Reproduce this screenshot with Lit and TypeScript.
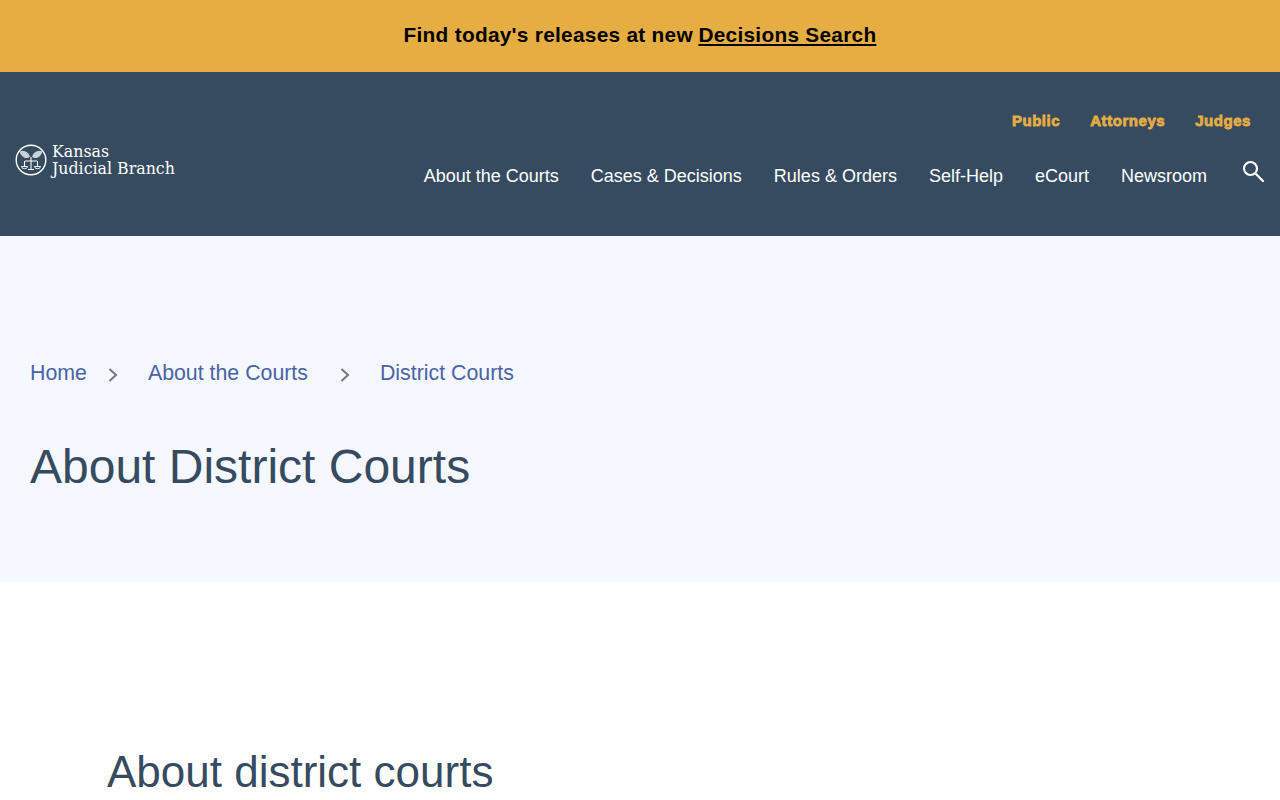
import { LitElement, html, css } from "lit";
import { customElement } from "lit/decorators.js";

@customElement("app-root")
export class AppRoot extends LitElement {
  static styles = css`
    :host { display: block; height: 800px; overflow: hidden; font-family: "Liberation Sans", Arial, sans-serif; background: #fff; }
    a { text-decoration: none; color: inherit; }
    .banner { height: 72px; box-sizing: border-box; padding-bottom: 2px; background: #e6ad42; display: flex; align-items: center; justify-content: center; font-size: 20.8px; font-weight: 700; color: #000; letter-spacing: 0.29px; }
    .banner a { text-decoration: underline; margin-left: 5.5px; }
    .header { height: 164px; background: #364b60; display: flex; justify-content: space-between; box-sizing: border-box; padding: 0 15px; }
    .logo { display: flex; align-items: center; gap: 5px; color: #fff; margin-top: 12px; height: 152px; }
    .logo-text { font-family: "DejaVu Serif", serif; font-size: 15.8px; line-height: 17px; }
    .right { display: flex; flex-direction: column; align-items: flex-end; }
    .top { display: flex; gap: 30px; margin-top: 40px; padding-right: 14px; color: #e6ad42; font-size: 15px; font-weight: 700; line-height: 17px; letter-spacing: 0.55px; -webkit-text-stroke: 0.8px #e6ad42; }
    .main { display: flex; align-items: center; margin-top: 35px; color: #fff; font-size: 18px; line-height: 21px; }
    .nav { display: flex; gap: 32px; }
    .search { margin-left: 34px; width: 24px; height: 24px; display: block; position: relative; top: -5px; }
    .hero { height: 346px; background: #f5f8fe; box-sizing: border-box; padding: 124px 30px 0; }
    .crumbs { display: flex; align-items: center; font-size: 21.33px; line-height: 26px; color: #4a63a5; }
    .chev { width: 10px; height: 16px; flex: none; position: relative; top: 2px; }
    .c1 { margin: 0 30px 0 21px; }
    .c2 { margin: 0 30px 0 32px; }
    h1 { margin: 53px 0 0; font-size: 48px; line-height: 56px; font-weight: 400; color: #364b60; }
    h2 { margin: 0; padding: 164px 0 0 107px; font-size: 44px; line-height: 52px; font-weight: 400; color: #364b60; }
  `;
  render() {
    return html`
      <div class="banner"><span>Find today's releases at new</span><a href="#">Decisions Search</a></div>
      <header class="header">
        <a class="logo" href="#">
          <svg width="32" height="32" viewBox="0 0 32 32" fill="none" stroke="#fff">
            <circle cx="16" cy="16" r="14.8" stroke-width="1.4"/>
            <path d="M15 12.500C13 7.500 9 5.500 4.500 7.500c.5 2.500 2.500 5 5.500 6.500 2 .3 4-.2 5-1.500zM17 12.500c2-5 6-7 10.500-5-.5 2.500-2.500 5-5.500 6.500-2 .3-4-.2-5-1.500z" fill="#c9d0d6" stroke="none"/>
            <path d="M16 13v12.500M10 17h12M9.500 17v5.500M22.500 17v5.500M13 25.500h6" stroke-width="1.1"/>
            <path d="M6.500 22.500a3 2.200 0 0 0 6 0zM19.500 22.500a3 2.200 0 0 0 6 0z" stroke-width=".9"/>
          </svg>
          <span class="logo-text">Kansas<br />Judicial Branch</span>
        </a>
        <div class="right">
          <nav class="top"><a href="#">Public</a><a href="#">Attorneys</a><a href="#">Judges</a></nav>
          <div class="main">
            <nav class="nav"><a href="#">About the Courts</a><a href="#">Cases &amp; Decisions</a><a href="#">Rules &amp; Orders</a><a href="#">Self-Help</a><a href="#">eCourt</a><a href="#">Newsroom</a></nav>
            <svg class="search" viewBox="0 0 24 24" fill="none" stroke="#fff" stroke-width="2.200">
              <circle cx="9.500" cy="9.500" r="6.500"/><path d="M14.500 14.500l7.500 7.500" stroke-linecap="round"/>
            </svg>
          </div>
        </div>
      </header>
      <section class="hero">
        <nav class="crumbs">
          <a href="#">Home</a>
          <svg class="chev c1" viewBox="0 0 10 16" fill="none" stroke="#74787f" stroke-width="2"><path d="M1.500 2l6.500 6-6.500 6"/></svg>
          <a href="#">About the Courts</a>
          <svg class="chev c2" viewBox="0 0 10 16" fill="none" stroke="#74787f" stroke-width="2"><path d="M1.500 2l6.500 6-6.500 6"/></svg>
          <a href="#">District Courts</a>
        </nav>
        <h1>About District Courts</h1>
      </section>
      <h2>About district courts</h2>
    `;
  }
}
